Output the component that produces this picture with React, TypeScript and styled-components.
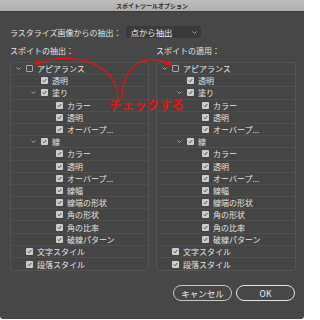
import React from "react";
import styled, { createGlobalStyle } from "styled-components";

const GlobalStyle = createGlobalStyle`
  html, body {
    margin: 0;
    padding: 0;
    background: #ffffff;
  }
  body {
    font-family: "Noto Sans CJK JP", "Noto Sans", sans-serif;
  }
`;

type Item = { label: string; level: number; checked: boolean; expander?: boolean };

const items: Item[] = [
  { label: "アピアランス", level: 0, checked: false, expander: true },
  { label: "透明", level: 1, checked: true },
  { label: "塗り", level: 1, checked: true, expander: true },
  { label: "カラー", level: 2, checked: true },
  { label: "透明", level: 2, checked: true },
  { label: "オーバープ...", level: 2, checked: true },
  { label: "線", level: 1, checked: true, expander: true },
  { label: "カラー", level: 2, checked: true },
  { label: "透明", level: 2, checked: true },
  { label: "オーバープ...", level: 2, checked: true },
  { label: "線幅", level: 2, checked: true },
  { label: "線端の形状", level: 2, checked: true },
  { label: "角の形状", level: 2, checked: true },
  { label: "角の比率", level: 2, checked: true },
  { label: "破線パターン", level: 2, checked: true },
  { label: "文字スタイル", level: 0, checked: true },
  { label: "段落スタイル", level: 0, checked: true },
];

const Chevron: React.FC = () => (
  <svg width="5" height="3" viewBox="0 0 5 3">
    <polyline points="0.5,0.5 2.5,2.5 4.5,0.5" fill="none" stroke="#b0b0b0" strokeWidth="0.9" />
  </svg>
);

const Tree: React.FC = () => (
  <Panel>
    {items.map((it, i) => (
      <Row key={i} $level={it.level}>
        <ExpSlot>{it.expander && <Chevron />}</ExpSlot>
        <Check $checked={it.checked}>
          {it.checked && (
            <svg width="5" height="5" viewBox="0 0 5 5">
              <polyline points="0.8,2.6 2,3.8 4.3,1" fill="none" stroke="#4a4a4a" strokeWidth="1" />
            </svg>
          )}
        </Check>
        <RowLabel>{it.label}</RowLabel>
      </Row>
    ))}
  </Panel>
);

const App: React.FC = () => {
  return (
    <>
      <GlobalStyle />
      <Dialog>
        <TitleBar>スポイトツールオプション</TitleBar>
        <Body>
          <ExtractRow>
            <span>ラスタライズ画像からの抽出：</span>
            <Select>
              <span>点から抽出</span>
              <Chevron />
            </Select>
          </ExtractRow>
          <Columns>
            <Column>
              <SectionLabel>スポイトの抽出：</SectionLabel>
              <Tree />
            </Column>
            <Column>
              <SectionLabel>スポイトの適用：</SectionLabel>
              <Tree />
            </Column>
          </Columns>
          <Footer>
            <Button>キャンセル</Button>
            <Button $primary>OK</Button>
          </Footer>
        </Body>
        <Arrows width="304" height="319" viewBox="0 0 304 319">
          <defs>
            <marker id="head" markerWidth="6" markerHeight="6" refX="5" refY="3" orient="auto" markerUnits="userSpaceOnUse">
              <path d="M0,0 L6,3 L0,6 Z" fill="#ee1010" />
            </marker>
          </defs>
          <path d="M118 99 C 118 62, 70 50, 35 64" fill="none" stroke="#ee1010" strokeWidth="1.2" markerEnd="url(#head)" />
          <path d="M122 99 C 122 62, 150 52, 171 65" fill="none" stroke="#ee1010" strokeWidth="1.2" markerEnd="url(#head)" />
        </Arrows>
        <Note>チェックする</Note>
      </Dialog>
    </>
  );
};

const Dialog = styled.div`
  position: relative;
  width: 304px;
  height: 319px;
  background: #474747;
  border-bottom-right-radius: 3px;
  border-bottom-left-radius: 3px;
  display: flex;
  flex-direction: column;
  color: #e2e2e2;
  overflow: hidden;
`;

const TitleBar = styled.div`
  height: 11px;
  background: linear-gradient(#bdbdbd, #aeaeae);
  border-bottom: 1px solid #3a3a3a;
  color: #2a2a2a;
  font-size: 6px;
  font-weight: 700;
  display: flex;
  align-items: center;
  justify-content: center;
`;

const Body = styled.div`
  display: flex;
  flex-direction: column;
  padding: 0 9px 0 10px;
`;

const ExtractRow = styled.div`
  display: flex;
  align-items: center;
  gap: 4px;
  margin-top: 14px;
  font-size: 8px;
  height: 12px;
`;

const Select = styled.div`
  width: 66px;
  height: 12px;
  background: #3a3a3a;
  border-radius: 2px;
  display: flex;
  align-items: center;
  justify-content: space-between;
  padding: 0 4px 0 5px;
  font-size: 8.4px;
  color: #f0f0f0;
`;

const Columns = styled.div`
  display: grid;
  grid-template-columns: 139px 140px;
  column-gap: 7px;
  margin-top: 8px;
`;

const Column = styled.div`
  display: flex;
  flex-direction: column;
`;

const SectionLabel = styled.div`
  font-size: 8px;
  height: 10px;
  line-height: 10px;
  margin-bottom: 6px;
  color: #e6e6e6;
`;

const Panel = styled.div`
  border: 1px solid #555555;
  border-radius: 2px;
  background: #454545;
`;

const Row = styled.div<{ $level: number }>`
  height: 12.2px;
  display: flex;
  align-items: center;
  padding-left: ${(p) => 5 + p.$level * 15}px;
  border-bottom: 1px solid #4f4f4f;
  box-sizing: border-box;
  &:last-child {
    border-bottom: none;
  }
`;

const ExpSlot = styled.div`
  width: 10px;
  display: flex;
  align-items: center;
`;

const Check = styled.div<{ $checked: boolean }>`
  width: 7px;
  height: 7px;
  box-sizing: border-box;
  border-radius: 1px;
  background: ${(p) => (p.$checked ? "#cdcdcd" : "transparent")};
  border: ${(p) => (p.$checked ? "none" : "1px solid #a8a8a8")};
  display: flex;
  align-items: center;
  justify-content: center;
`;

const RowLabel = styled.span`
  margin-left: 4px;
  font-size: 8px;
  color: #e4e4e4;
  white-space: nowrap;
`;

const Footer = styled.div`
  display: flex;
  justify-content: flex-end;
  gap: 4px;
  margin-top: 14px;
`;

const Button = styled.div<{ $primary?: boolean }>`
  width: 59px;
  height: 16px;
  box-sizing: border-box;
  border-radius: 8px;
  border: ${(p) => (p.$primary ? "1.6px solid #e6e6e6" : "1px solid #c8c8c8")};
  display: flex;
  align-items: center;
  justify-content: center;
  font-size: 8.5px;
  color: #f0f0f0;
  font-family: "Noto Sans CJK JP", "Liberation Sans", sans-serif;
`;

const Arrows = styled.svg`
  position: absolute;
  left: 0;
  top: 0;
  pointer-events: none;
`;

const Note = styled.div`
  position: absolute;
  left: 109px;
  top: 97px;
  font-size: 12.5px;
  font-weight: 700;
  color: #ee1010;
  white-space: nowrap;
  line-height: 1.2;
`;

export default App;
